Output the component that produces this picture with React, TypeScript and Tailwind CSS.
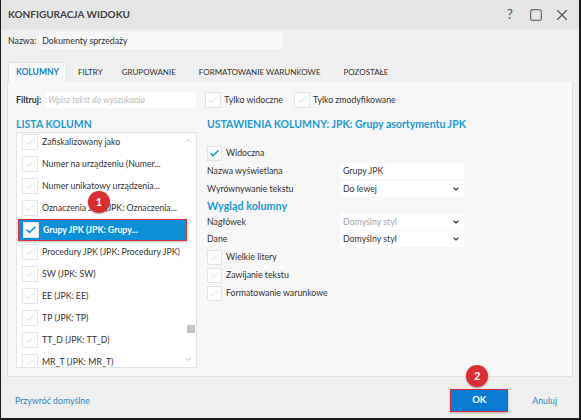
import { ChevronDown, ChevronUp, X, Square, Check } from "lucide-react";

const font = { fontFamily: 'Lato, "Open Sans", sans-serif' };

function Box({ on, small }: { on?: boolean; small?: boolean }) {
  return (
    <span
      className={`flex shrink-0 items-center justify-center border border-[#e4e4e4] bg-white ${
        small ? "h-[15px] w-[15px]" : "h-[16px] w-[16px]"
      }`}
    >
      <Check
        className={small ? "h-[11px] w-[11px]" : "h-[12px] w-[12px]"}
        strokeWidth={on ? 3 : 2}
        color={on ? "#0c8fd6" : "#c6e4f6"}
      />
    </span>
  );
}

function Badge({ n }: { n: number }) {
  return (
    <span className="flex h-[22px] w-[22px] items-center justify-center rounded-full bg-[#dc2d33] text-[11px] font-bold text-white shadow-[0_1px_2px_rgba(0,0,0,0.35)]">
      {n}
    </span>
  );
}

const rows = [
  "Zafiskalizowany jako",
  "Numer na urządzeniu (Numer...",
  "Numer unikatowy urządzenia...",
  "Oznaczenia JPK (JPK: Oznaczenia...",
  "Grupy JPK (JPK: Grupy...",
  "Procedury JPK (JPK: Procedury JPK)",
  "SW (JPK: SW)",
  "EE (JPK: EE)",
  "TP (JPK: TP)",
  "TT_D (JPK: TT_D)",
  "MR_T (JPK: MR_T)",
];

function Select({ value, muted }: { value: string; muted?: boolean }) {
  return (
    <div className="flex h-[16px] w-[124px] items-center justify-between bg-white pl-[3px] pr-[4px]">
      <span className={muted ? "text-[#a8a8a8]" : ""}>{value}</span>
      <ChevronDown className="h-[8px] w-[8px]" strokeWidth={3.5} color="#333" />
    </div>
  );
}

export default function App() {
  return (
    <div
      className="relative h-[420px] w-[581px] overflow-hidden border-b-2 border-l border-r-2 border-[#1a1a1a] bg-[#efefef] text-[8.75px] text-[#333]"
      style={font}
    >
      {/* title bar */}
      <div className="flex h-[29px] items-center justify-between bg-[#e5e5e5] pl-[7px] pr-[4px]">
        <span className="text-[10px] font-bold text-[#444]">KONFIGURACJA WIDOKU</span>
        <div className="flex items-center text-[#555]">
          <span className="flex w-[26px] justify-center text-[13px]">?</span>
          <span className="flex w-[26px] justify-center">
            <Square className="h-[14px] w-[14px]" strokeWidth={1.7} />
          </span>
          <span className="flex w-[26px] justify-center">
            <X className="h-[18px] w-[18px]" strokeWidth={1.5} />
          </span>
        </div>
      </div>

      {/* name */}
      <div className="mt-[3px] flex h-[17px] items-center pl-[7px]">
        <span>Nazwa:</span>
        <div className="ml-[3px] flex h-[17px] w-[244px] items-center bg-[#f7f7f7] pl-[3px]">
          Dokumenty sprzedaży
        </div>
      </div>

      {/* tabs */}
      <div className="mt-[13px] flex h-[20px] pl-[7px] text-[8px]">
        <div className="flex w-[59px] items-center justify-center border-l border-r border-t border-[#e0e0e0] bg-[#f7f7f7] text-[8.5px] font-bold text-[#1b7fc4]">
          KOLUMNY
        </div>
        <div className="ml-[11px] flex items-center">FILTRY</div>
        <div className="ml-[19px] flex items-center">GRUPOWANIE</div>
        <div className="ml-[23px] flex items-center">FORMATOWANIE WARUNKOWE</div>
        <div className="ml-[23px] flex items-center">POZOSTAŁE</div>
      </div>

      {/* panel */}
      <div className="mx-[6px] h-[295px] border border-t-0 border-[#e0e0e0] bg-[#f7f7f7]">
        <div className="flex items-center pl-[8px] pt-[10px]">
          <span className="font-bold">Filtruj:</span>
          <div className="ml-[5px] flex h-[16px] w-[150px] items-center bg-white pl-[2px] italic text-[#bdbdbd]">
            Wpisz tekst do wyszukania
          </div>
          <div className="ml-[9px] flex items-center gap-[3px]">
            <Box />
            <span>Tylko widoczne</span>
          </div>
          <div className="ml-[11px] flex items-center gap-[3px]">
            <Box />
            <span>Tylko zmodyfikowane</span>
          </div>
        </div>

        <div className="flex pl-[8px] pt-[9px]">
          {/* left column */}
          <div className="w-[181px]">
            <div className="text-[10.5px] font-bold leading-[14px] text-[#1a9ad2]">LISTA KOLUMN</div>
            <div className="relative mt-[1px] h-[236px] overflow-hidden border border-[#e4e4e4] bg-white">
              <div className="-mt-[2px] flex flex-col pl-[5px]">
                {rows.map((r, i) =>
                  i === 4 ? (
                    <div
                      key={r}
                      className="-ml-[4px] flex h-[22px] w-[169px] items-center gap-[4px] border-[1.5px] border-[#d7313b] bg-[#0e90d8] pl-[4px] font-bold text-white shadow-[0_1px_2px_rgba(0,0,0,0.3)]"
                    >
                      <Box on />
                      <span>{r}</span>
                    </div>
                  ) : (
                    <div key={r} className="flex h-[22px] items-center gap-[4px]">
                      <Box />
                      <span className="whitespace-nowrap">{r}</span>
                    </div>
                  )
                )}
              </div>
              <ChevronUp className="absolute right-[3px] top-[3px] h-[9px] w-[9px]" color="#aaa" />
              <div className="absolute right-[1px] top-[192px] h-[8px] w-[8px] bg-[#c4c4c4]" />
              <ChevronDown className="absolute bottom-[3px] right-[3px] h-[9px] w-[9px]" color="#aaa" />
              <div className="absolute left-[71px] top-[58px]">
                <Badge n={1} />
              </div>
            </div>
          </div>

          {/* right column */}
          <div className="ml-[10px] flex w-[257px] flex-col">
            <div className="whitespace-nowrap text-[10.5px] font-bold leading-[14px] text-[#1a9ad2]">
              USTAWIENIA KOLUMNY: JPK: Grupy asortymentu JPK
            </div>
            <div className="mt-[13px] flex h-[18px] items-center gap-[4px]">
              <Box on small />
              <span>Widoczna</span>
            </div>
            <div className="flex h-[18px] items-center justify-between">
              <span>Nazwa wyświetlana</span>
              <div className="flex h-[16px] w-[124px] items-center bg-white pl-[3px]">Grupy JPK</div>
            </div>
            <div className="flex h-[18px] items-center justify-between">
              <span>Wyrównywanie tekstu</span>
              <Select value="Do lewej" />
            </div>
            <div className="flex h-[16px] items-center text-[10.75px] font-bold text-[#1a9ad2]">
              Wygląd kolumny
            </div>
            <div className="flex h-[16px] items-center justify-between">
              <span>Nagłówek</span>
              <Select value="Domyślny styl" muted />
            </div>
            <div className="flex h-[18px] items-center justify-between">
              <span>Dane</span>
              <Select value="Domyślny styl" />
            </div>
            {["Wielkie litery", "Zawijanie tekstu", "Formatowanie warunkowe"].map((t) => (
              <div key={t} className="flex h-[18px] items-center gap-[4px]">
                <Box small />
                <span>{t}</span>
              </div>
            ))}
          </div>
        </div>
      </div>

      {/* footer */}
      <div className="flex h-[47px] items-center justify-between pl-[14px] pr-[22px]">
        <span className="text-[#2f86c7]">Przywróć domyślne</span>
        <div className="flex items-center">
          <div className="relative flex h-[23px] w-[58px] items-center justify-center border-[1.5px] border-[#d7313b] bg-[#0b7ad4] text-[9.5px] font-bold text-white shadow-[0_1px_2px_rgba(0,0,0,0.3)]">
            OK
            <div className="absolute left-[15px] top-[-25px]">
              <Badge n={2} />
            </div>
          </div>
          <span className="ml-[24px] text-[#2f86c7]">Anuluj</span>
        </div>
      </div>
    </div>
  );
}
